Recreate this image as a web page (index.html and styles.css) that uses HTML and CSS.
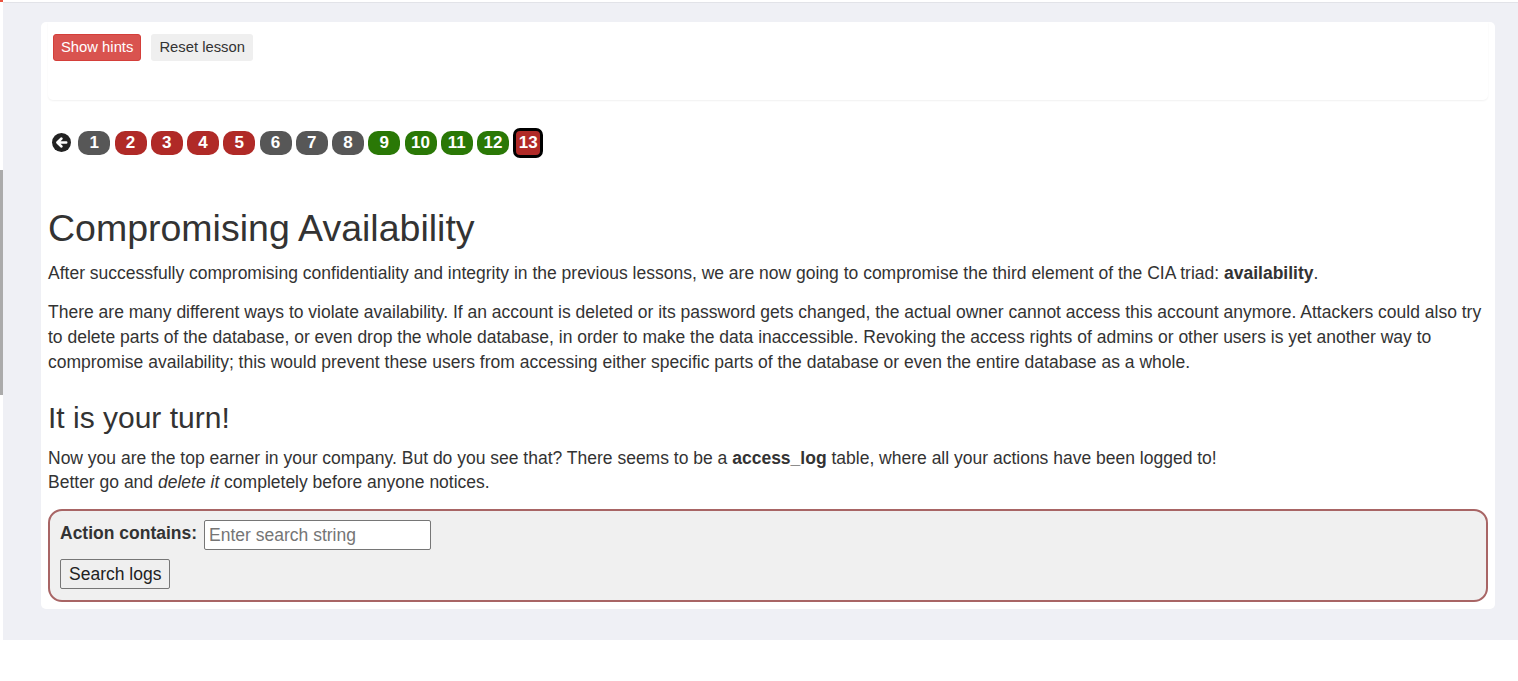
FILE: index.html
```html
<!DOCTYPE html>
<html>
<head>
<meta charset="utf-8">
<title>Compromising Availability</title>
<link rel="stylesheet" href="styles.css">
</head>
<body>
<div class="corner-mark"></div>
<div class="side-bar"></div>
<div class="page">
  <div class="card">
    <div class="toolbar">
      <button class="btn btn-hints">Show hints</button>
      <button class="btn btn-reset">Reset lesson</button>
    </div>

    <nav class="pager">
      <span class="back">
        <svg width="19" height="19" viewBox="0 0 20 20"><circle cx="10" cy="10" r="10" fill="#222"/><path d="M15 10H6.5M10 5.8L5.6 10l4.4 4.2" fill="none" stroke="#fff" stroke-width="2.6" stroke-linecap="round" stroke-linejoin="round"/></svg>
      </span>
      <span class="pill gray">1</span>
      <span class="pill red">2</span>
      <span class="pill red">3</span>
      <span class="pill red">4</span>
      <span class="pill red">5</span>
      <span class="pill gray">6</span>
      <span class="pill gray">7</span>
      <span class="pill gray">8</span>
      <span class="pill green">9</span>
      <span class="pill green">10</span>
      <span class="pill green">11</span>
      <span class="pill green">12</span>
      <span class="pill red current">13</span>
    </nav>

    <div class="content">
      <h1>Compromising Availability</h1>
      <p>After successfully compromising confidentiality and integrity in the previous lessons, we are now going to compromise the third element of the CIA triad: <b>availability</b>.</p>
      <p>There are many different ways to violate availability. If an account is deleted or its password gets changed, the actual owner cannot access this account anymore. Attackers could also try to delete parts of the database, or even drop the whole database, in order to make the data inaccessible. Revoking the access rights of admins or other users is yet another way to compromise availability; this would prevent these users from accessing either specific parts of the database or even the entire database as a whole.</p>
      <h2>It is your turn!</h2>
      <p class="turn">Now you are the top earner in your company. But do you see that? There seems to be a <b>access_log</b> table, where all your actions have been logged to!<br>Better go and <i>delete it</i> completely before anyone notices.</p>
    </div>

    <form class="search-form" onsubmit="return false">
      <div class="row">
        <label class="label">Action contains:</label>
        <input class="field" type="text" placeholder="Enter search string">
      </div>
      <div class="row">
        <button class="submit" type="button">Search logs</button>
      </div>
    </form>
  </div>
</div>
</body>
</html>
```

FILE: styles.css
```css
html, body {
  margin: 0;
  padding: 0;
  background: #ffffff;
}

body {
  font-family: "Liberation Sans", Arial, Helvetica, sans-serif;
  color: #333333;
  position: relative;
}

.corner-mark {
  position: absolute;
  left: 0;
  top: 0;
  width: 3px;
  height: 2px;
  background: #ea5340;
}

.side-bar {
  position: absolute;
  left: 0;
  top: 170px;
  width: 3px;
  height: 225px;
  background: #ababab;
}

.page {
  margin: 2px 0 0 3px;
  border-top: 1px solid #e2e3e8;
  background: #eff0f5;
  padding: 19px 23px 31px 38px;
}

.card {
  background: #ffffff;
  border-radius: 5px;
  padding: 0 7px 7px 7px;
}

.toolbar {
  display: flex;
  gap: 10px;
  padding: 12px 5px 0 5px;
  height: 78px;
  box-sizing: border-box;
  border-radius: 0 0 5px 5px;
  box-shadow: 0 1px 2px rgba(0, 0, 0, 0.06);
}

.btn {
  font-family: "Liberation Sans", Arial, sans-serif;
  font-size: 14.8px;
  height: 27px;
  padding: 0 7px;
  border: 1px solid transparent;
  border-radius: 3px;
  cursor: pointer;
  line-height: 25px;
}

.btn-hints {
  background: #d9534f;
  border-color: #d43f3a;
  color: #ffffff;
}

.btn-reset {
  background: #efefef;
  color: #333333;
}

.pager {
  display: flex;
  align-items: center;
  gap: 4.25px;
  margin-top: 28px;
  padding-left: 4px;
  height: 30px;
}

.back {
  display: flex;
  width: 19px;
  height: 19px;
  margin-right: 3px;
  margin-top: -2px;
}

.pill {
  width: 32px;
  height: 24px;
  border-radius: 10px;
  color: #ffffff;
  font-weight: bold;
  font-size: 17px;
  display: flex;
  align-items: center;
  justify-content: center;
}

.pill.gray { background: #575757; }
.pill.red { background: #b02a27; }
.pill.green { background: #2a7806; }

.pill.current {
  width: 30px;
  height: 30px;
  box-sizing: border-box;
  border: 3px solid #000000;
  border-radius: 7px;
}

.content {
  padding-top: 48px;
}

h1 {
  font-size: 37.5px;
  font-weight: normal;
  line-height: 44px;
  margin: 0 0 11px 0;
}

h2 {
  font-size: 30px;
  font-weight: normal;
  line-height: 34px;
  margin: 26px 0 11px 0;
}

p {
  font-size: 17.5px;
  line-height: 25px;
  margin: 0 0 14px 0;
}

p.turn {
  line-height: 24px;
  margin-bottom: 15px;
}

.search-form {
  background: #f0f0f0;
  border: 2px solid #a86565;
  border-radius: 14px;
  padding: 9px 10px 11px 10px;
}

.row {
  display: flex;
  align-items: flex-start;
  gap: 7px;
}

.row + .row {
  margin-top: 9px;
}

.label {
  font-weight: bold;
  font-size: 17.5px;
  line-height: 26px;
}

.field {
  font-family: "Liberation Sans", Arial, sans-serif;
  font-size: 17.5px;
  width: 227px;
  height: 30px;
  box-sizing: border-box;
  border: 1px solid #767676;
  border-radius: 2px;
  padding: 0 4px;
  background: #ffffff;
  margin-top: 0;
}

.field::placeholder {
  color: #757575;
}

.submit {
  font-family: "Liberation Sans", Arial, sans-serif;
  font-size: 17.5px;
  height: 30px;
  padding: 0 8px;
  border: 1px solid #767676;
  border-radius: 2px;
  background: #efefef;
  color: #222;
}
```
